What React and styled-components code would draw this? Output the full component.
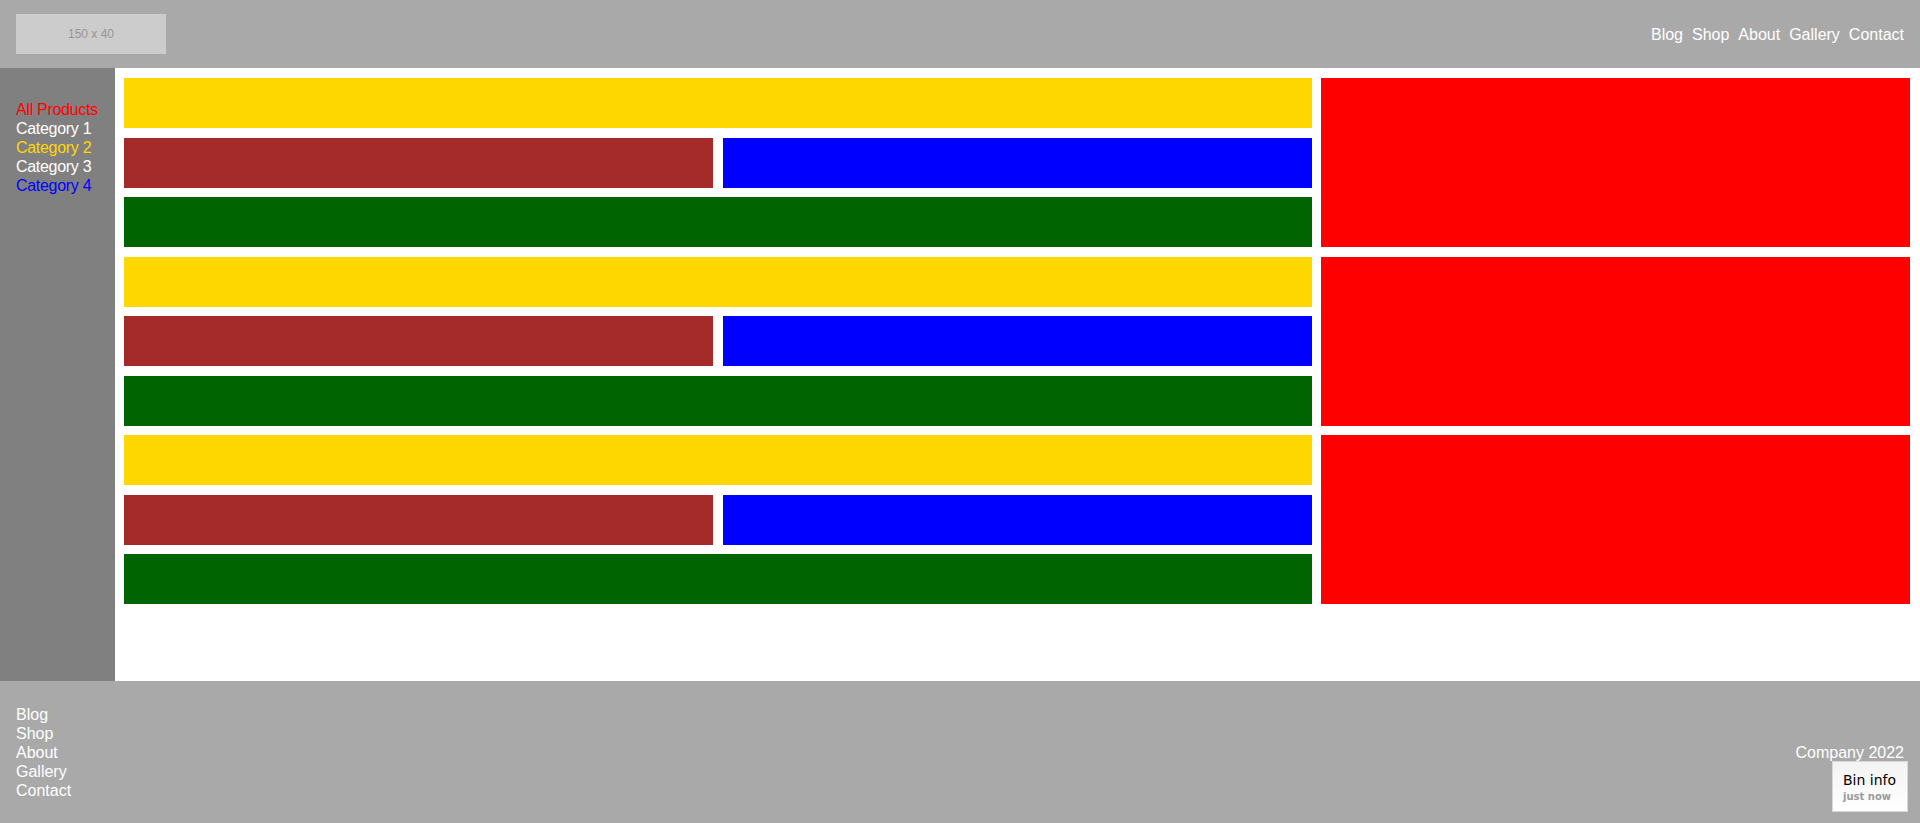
import React from 'react';
import styled, { createGlobalStyle } from 'styled-components';

const GlobalStyle = createGlobalStyle`
  html, body {
    margin: 0;
    padding: 0;
  }
  body {
    font-family: 'Liberation Sans', Arial, sans-serif;
    font-size: 16px;
  }
`;

const Page = styled.div`
  display: grid;
  grid-template-rows: 68px 613px 142px;
  height: 823px;
`;

const Header = styled.header`
  display: flex;
  align-items: center;
  justify-content: space-between;
  padding: 0 16px;
  background-color: #a9a9a9;
`;

const Logo = styled.div`
  width: 150px;
  height: 40px;
  background-color: #cccccc;
  color: #969696;
  font-size: 12px;
  display: flex;
  align-items: center;
  justify-content: center;
`;

const Nav = styled.nav`
  display: flex;
  gap: 9px;
`;

const NavLink = styled.a`
  color: #ffffff;
  text-decoration: none;
  line-height: 19px;
  white-space: nowrap;
`;

const Body = styled.div`
  display: grid;
  grid-template-columns: 115px 1fr;
`;

const Sidebar = styled.aside`
  background-color: #808080;
  padding: 32px 0 0 16px;
  display: flex;
  flex-direction: column;
`;

const Category = styled.a`
  color: ${(props) => props.color || '#ffffff'};
  text-decoration: none;
  line-height: 19px;
  white-space: nowrap;
  letter-spacing: -0.3px;
`;

const Main = styled.main`
  background-color: #ffffff;
  padding: 10px 10px 0 9px;
`;

const Grid = styled.div`
  display: grid;
  grid-template-columns: repeat(3, 1fr);
  grid-auto-rows: 50px;
  gap: 9.5px;
`;

const Block = styled.div`
  background-color: ${(props) => props.color};
  grid-column: span ${(props) => props.cols || 1};
  grid-row: span ${(props) => props.rows || 1};
`;

const Footer = styled.footer`
  display: flex;
  align-items: center;
  justify-content: space-between;
  padding: 0 16px;
  background-color: #a9a9a9;
  color: #ffffff;
`;

const FooterLinks = styled.div`
  display: flex;
  flex-direction: column;
`;

const Copy = styled.div`
  line-height: 19px;
`;

const BinInfo = styled.div`
  position: fixed;
  right: 12px;
  bottom: 11px;
  width: 76px;
  height: 51px;
  box-sizing: border-box;
  padding: 9px 0 0 10px;
  background: linear-gradient(#f3f3f3, #ffffff);
  border: 1px solid #d8d8d8;
  font-family: 'DejaVu Sans', 'Liberation Sans', sans-serif;
`;

const BinTitle = styled.div`
  font-size: 14px;
  color: #000000;
  line-height: 18px;
`;

const BinTime = styled.div`
  font-size: 10px;
  font-weight: bold;
  color: #9a9a9a;
  margin-top: 2px;
`;

const links = ['Blog', 'Shop', 'About', 'Gallery', 'Contact'];

const categories = [
  { name: 'All Products', color: '#ff0000' },
  { name: 'Category 1' },
  { name: 'Category 2', color: '#ffd700' },
  { name: 'Category 3' },
  { name: 'Category 4', color: '#0000ff' },
];

const Group = () => (
  <>
    <Block color="#ffd700" cols={2} />
    <Block color="#ff0000" rows={3} />
    <Block color="#a52a2a" />
    <Block color="#0000ff" />
    <Block color="#006400" cols={2} />
  </>
);

const App = () => {
  return (
    <>
      <GlobalStyle />
      <Page>
        <Header>
          <Logo>150 x 40</Logo>
          <Nav>
            {links.map((l) => (
              <NavLink key={l} href="#">
                {l}
              </NavLink>
            ))}
          </Nav>
        </Header>
        <Body>
          <Sidebar>
            {categories.map((c) => (
              <Category key={c.name} color={c.color} href="#">
                {c.name}
              </Category>
            ))}
          </Sidebar>
          <Main>
            <Grid>
              <Group />
              <Group />
              <Group />
            </Grid>
          </Main>
        </Body>
        <Footer>
          <FooterLinks>
            {links.map((l) => (
              <NavLink key={l} href="#">
                {l}
              </NavLink>
            ))}
          </FooterLinks>
          <Copy>Company 2022</Copy>
        </Footer>
      </Page>
      <BinInfo>
        <BinTitle>Bin info</BinTitle>
        <BinTime>just now</BinTime>
      </BinInfo>
    </>
  );
};

export default App;
